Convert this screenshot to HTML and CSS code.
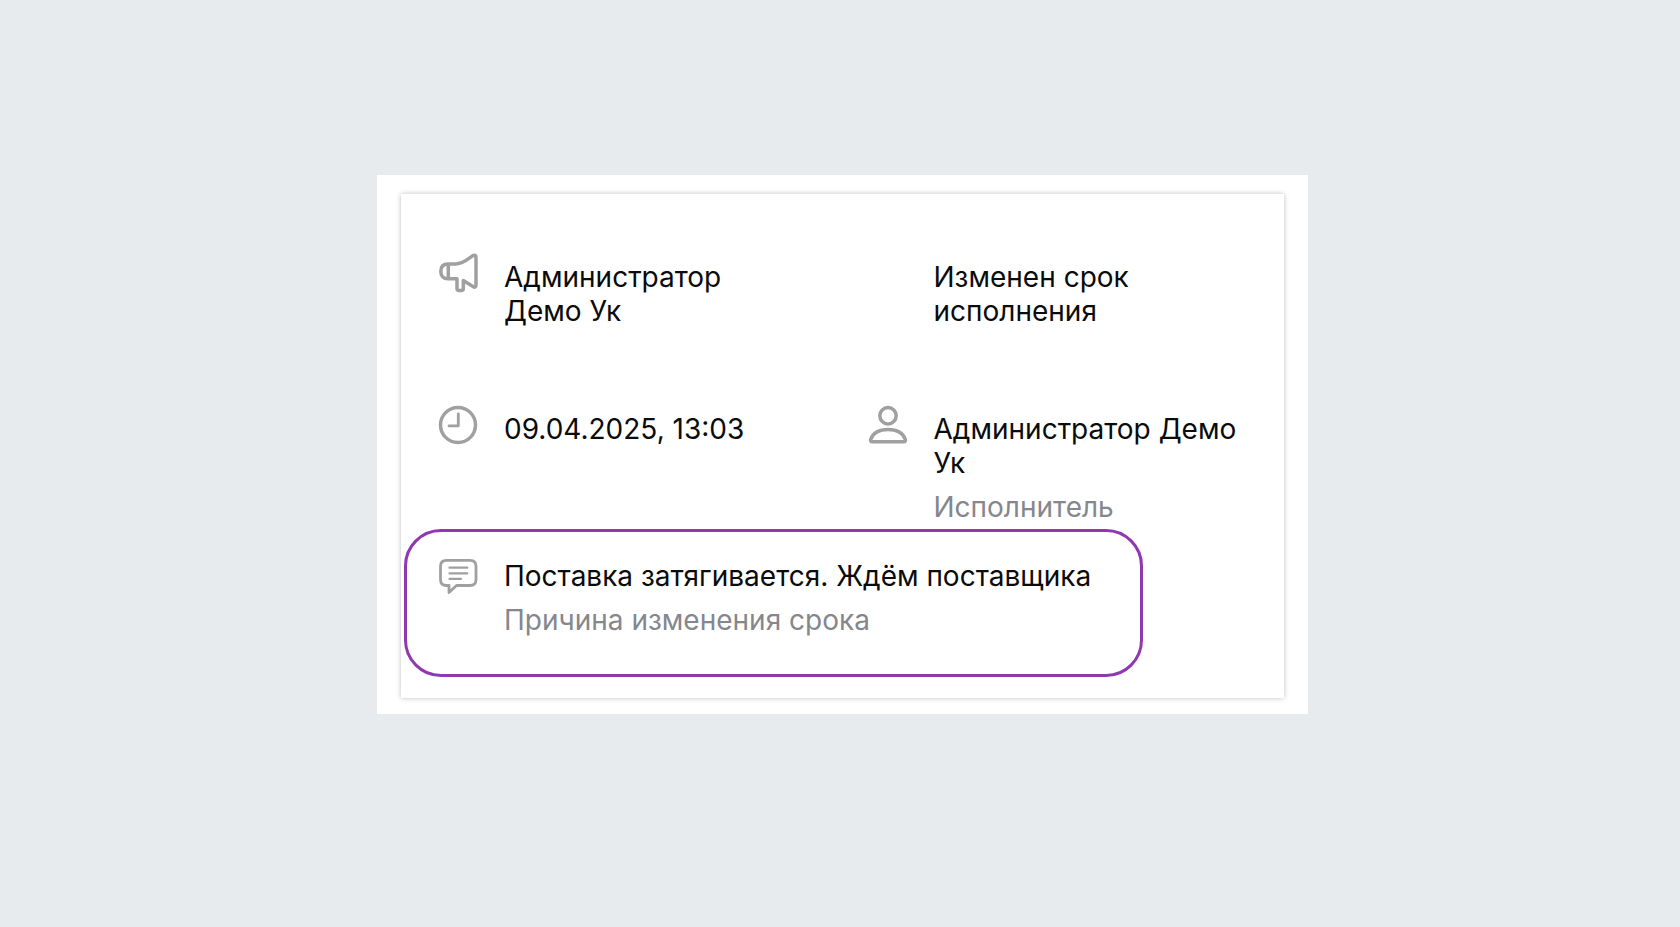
FILE: index.html
```html
<!DOCTYPE html>
<html lang="ru">
<head>
<meta charset="utf-8">
<meta name="viewport" content="width=device-width, initial-scale=1">
<title>Изменен срок исполнения</title>
<link rel="stylesheet" href="styles.css">
</head>
<body>
<main class="sheet">
  <article class="card">
    <div class="details">
      <div class="item item--narrow">
        <svg class="icon" viewBox="0 0 40 40" aria-hidden="true">
          <path d="M10 11H17.500C24.500 11 29.500 6.500 34.500 2.800Q38 1 38 4.500V32Q38 35.300 35 33.500L25.300 27.500V35.500Q25.300 37.500 23.300 37.500H21Q19 37.500 19 35.500V25.800H10C5.200 25.800 2.800 23 2.800 18.400S5.200 11 10 11ZM10.300 11V25.800"/>
        </svg>
        <p class="text">Администратор Демо Ук</p>
      </div>
      <div class="item">
        <span class="icon"></span>
        <p class="text">Изменен срок исполнения</p>
      </div>
      <div class="item">
        <svg class="icon" viewBox="0 0 40 40" aria-hidden="true">
          <circle cx="20" cy="20" r="17.500"/>
          <path class="thin" d="M20.300 9V20.800H11"/>
        </svg>
        <p class="text"><time datetime="2025-04-09T13:03">09.04.2025, 13:03</time></p>
      </div>
      <div class="item">
        <svg class="icon" viewBox="0 0 40 40" aria-hidden="true">
          <circle cx="20" cy="10.700" r="8.200"/>
          <path d="M4.500 36.800H35.500Q38 36.800 37.300 34.300C35 28 28.500 24.500 20 24.500S5 28 2.700 34.300Q2 36.800 4.500 36.800Z"/>
        </svg>
        <div class="text">
          <p>Администратор Демо Ук</p>
          <p class="caption">Исполнитель</p>
        </div>
      </div>
    </div>
    <section class="highlight">
      <div class="item item--flush">
        <svg class="icon" viewBox="0 0 40 40" aria-hidden="true">
          <path class="bubble" d="M8.500 8.300H32Q38 8.300 38 14.300V27.500Q38 33.500 32 33.500H18.500L11 40.500V33.500H8.500Q2.500 33.500 2.500 27.500V14.300Q2.500 8.300 8.500 8.300Z"/>
          <path class="lines" d="M11.500 15.700H29.300M11.500 21.300H29.300M11.500 26.800H23"/>
        </svg>
        <div class="text">
          <p>Поставка затягивается. Ждём поставщика</p>
          <p class="caption">Причина изменения срока</p>
        </div>
      </div>
    </section>
  </article>
</main>
</body>
</html>
```

FILE: styles.css
```css
* {
  box-sizing: border-box;
}

body {
  margin: 0;
  min-height: 100vh;
  padding: 175px 372px 40px 377px;
  background: #e7ebee;
  color: #0b0b0c;
  font-family: Inter, "Noto Sans", sans-serif;
  font-size: 28px;
  line-height: 34px;
}

p {
  margin: 0;
}

.sheet {
  padding: 19px 24px 16px;
  background: #fff;
}

.card {
  padding: 59px 3px 21px;
  background: #fff;
  box-shadow: 0 0 5px rgba(0, 0, 0, 0.26);
}

.details {
  display: grid;
  grid-template-columns: 1fr 1fr;
  gap: 77px 16px;
  padding-left: 34px;
}

.item {
  display: flex;
  gap: 26px;
  padding-right: 20px;
}

.item--narrow {
  padding-right: 80px;
}

.item--flush {
  padding-right: 0;
}

.icon {
  flex: none;
  width: 40px;
  height: 40px;
  overflow: visible;
  fill: none;
  stroke: #a0a0a0;
  stroke-width: 3.5;
  stroke-linecap: round;
  stroke-linejoin: round;
}

.thin,
.bubble {
  stroke-width: 2.8;
}

.lines {
  stroke-width: 2.2;
}

.text {
  padding-top: 7px;
}

.caption {
  margin-top: 10px;
  color: #85878d;
}

.highlight {
  width: fit-content;
  margin-top: 5px;
  padding: 20px 49px 37px 31px;
  border: 3px solid #8f38b0;
  border-radius: 37px;
}

@media (max-width: 1500px) {
  body {
    padding: 40px 24px;
  }
}
```
